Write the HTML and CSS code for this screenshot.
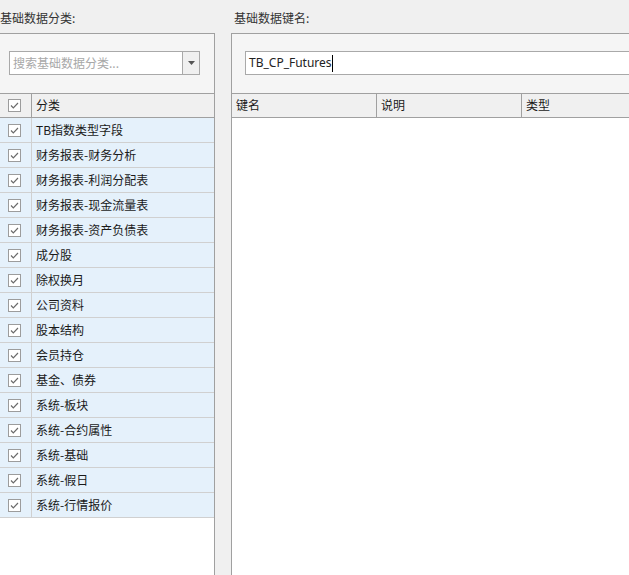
FILE: index.html
```html
<!DOCTYPE html>
<html lang="zh-CN">
<head>
<meta charset="utf-8">
<title>基础数据</title>
<link rel="stylesheet" href="styles.css">
</head>
<body>
<div class="page">
  <div class="col col-left">
    <div class="label">基础数据分类:</div>
    <div class="panel">
      <div class="panel-top">
        <div class="combo">
          <span class="combo-text">搜索基础数据分类...</span>
          <span class="combo-btn"><svg width="7" height="4" viewBox="0 0 7 4"><path d="M0 0H7L3.5 4Z" fill="#555"/></svg></span>
        </div>
      </div>
      <div class="grid">
        <div class="row head">
          <div class="cell chk"><svg class="cb" width="13" height="13" viewBox="0 0 13 13"><rect x="0.5" y="0.5" width="12" height="12" fill="#fff" stroke="#9c9c9c"/><path d="M3 6.5L5.3 8.8L10 4" fill="none" stroke="#6a6a6a" stroke-width="1.2"/></svg></div>
          <div class="cell name">分类</div>
        </div>
        <div class="row item"><div class="cell chk"><svg class="cb" width="13" height="13" viewBox="0 0 13 13"><rect x="0.5" y="0.5" width="12" height="12" fill="#fff" stroke="#9c9c9c"/><path d="M3 6.5L5.3 8.8L10 4" fill="none" stroke="#6a6a6a" stroke-width="1.2"/></svg></div><div class="cell name">TB指数类型字段</div></div>
        <div class="row item"><div class="cell chk"><svg class="cb" width="13" height="13" viewBox="0 0 13 13"><rect x="0.5" y="0.5" width="12" height="12" fill="#fff" stroke="#9c9c9c"/><path d="M3 6.5L5.3 8.8L10 4" fill="none" stroke="#6a6a6a" stroke-width="1.2"/></svg></div><div class="cell name">财务报表-财务分析</div></div>
        <div class="row item"><div class="cell chk"><svg class="cb" width="13" height="13" viewBox="0 0 13 13"><rect x="0.5" y="0.5" width="12" height="12" fill="#fff" stroke="#9c9c9c"/><path d="M3 6.5L5.3 8.8L10 4" fill="none" stroke="#6a6a6a" stroke-width="1.2"/></svg></div><div class="cell name">财务报表-利润分配表</div></div>
        <div class="row item"><div class="cell chk"><svg class="cb" width="13" height="13" viewBox="0 0 13 13"><rect x="0.5" y="0.5" width="12" height="12" fill="#fff" stroke="#9c9c9c"/><path d="M3 6.5L5.3 8.8L10 4" fill="none" stroke="#6a6a6a" stroke-width="1.2"/></svg></div><div class="cell name">财务报表-现金流量表</div></div>
        <div class="row item"><div class="cell chk"><svg class="cb" width="13" height="13" viewBox="0 0 13 13"><rect x="0.5" y="0.5" width="12" height="12" fill="#fff" stroke="#9c9c9c"/><path d="M3 6.5L5.3 8.8L10 4" fill="none" stroke="#6a6a6a" stroke-width="1.2"/></svg></div><div class="cell name">财务报表-资产负债表</div></div>
        <div class="row item"><div class="cell chk"><svg class="cb" width="13" height="13" viewBox="0 0 13 13"><rect x="0.5" y="0.5" width="12" height="12" fill="#fff" stroke="#9c9c9c"/><path d="M3 6.5L5.3 8.8L10 4" fill="none" stroke="#6a6a6a" stroke-width="1.2"/></svg></div><div class="cell name">成分股</div></div>
        <div class="row item"><div class="cell chk"><svg class="cb" width="13" height="13" viewBox="0 0 13 13"><rect x="0.5" y="0.5" width="12" height="12" fill="#fff" stroke="#9c9c9c"/><path d="M3 6.5L5.3 8.8L10 4" fill="none" stroke="#6a6a6a" stroke-width="1.2"/></svg></div><div class="cell name">除权换月</div></div>
        <div class="row item"><div class="cell chk"><svg class="cb" width="13" height="13" viewBox="0 0 13 13"><rect x="0.5" y="0.5" width="12" height="12" fill="#fff" stroke="#9c9c9c"/><path d="M3 6.5L5.3 8.8L10 4" fill="none" stroke="#6a6a6a" stroke-width="1.2"/></svg></div><div class="cell name">公司资料</div></div>
        <div class="row item"><div class="cell chk"><svg class="cb" width="13" height="13" viewBox="0 0 13 13"><rect x="0.5" y="0.5" width="12" height="12" fill="#fff" stroke="#9c9c9c"/><path d="M3 6.5L5.3 8.8L10 4" fill="none" stroke="#6a6a6a" stroke-width="1.2"/></svg></div><div class="cell name">股本结构</div></div>
        <div class="row item"><div class="cell chk"><svg class="cb" width="13" height="13" viewBox="0 0 13 13"><rect x="0.5" y="0.5" width="12" height="12" fill="#fff" stroke="#9c9c9c"/><path d="M3 6.5L5.3 8.8L10 4" fill="none" stroke="#6a6a6a" stroke-width="1.2"/></svg></div><div class="cell name">会员持仓</div></div>
        <div class="row item"><div class="cell chk"><svg class="cb" width="13" height="13" viewBox="0 0 13 13"><rect x="0.5" y="0.5" width="12" height="12" fill="#fff" stroke="#9c9c9c"/><path d="M3 6.5L5.3 8.8L10 4" fill="none" stroke="#6a6a6a" stroke-width="1.2"/></svg></div><div class="cell name">基金、债券</div></div>
        <div class="row item"><div class="cell chk"><svg class="cb" width="13" height="13" viewBox="0 0 13 13"><rect x="0.5" y="0.5" width="12" height="12" fill="#fff" stroke="#9c9c9c"/><path d="M3 6.5L5.3 8.8L10 4" fill="none" stroke="#6a6a6a" stroke-width="1.2"/></svg></div><div class="cell name">系统-板块</div></div>
        <div class="row item"><div class="cell chk"><svg class="cb" width="13" height="13" viewBox="0 0 13 13"><rect x="0.5" y="0.5" width="12" height="12" fill="#fff" stroke="#9c9c9c"/><path d="M3 6.5L5.3 8.8L10 4" fill="none" stroke="#6a6a6a" stroke-width="1.2"/></svg></div><div class="cell name">系统-合约属性</div></div>
        <div class="row item"><div class="cell chk"><svg class="cb" width="13" height="13" viewBox="0 0 13 13"><rect x="0.5" y="0.5" width="12" height="12" fill="#fff" stroke="#9c9c9c"/><path d="M3 6.5L5.3 8.8L10 4" fill="none" stroke="#6a6a6a" stroke-width="1.2"/></svg></div><div class="cell name">系统-基础</div></div>
        <div class="row item"><div class="cell chk"><svg class="cb" width="13" height="13" viewBox="0 0 13 13"><rect x="0.5" y="0.5" width="12" height="12" fill="#fff" stroke="#9c9c9c"/><path d="M3 6.5L5.3 8.8L10 4" fill="none" stroke="#6a6a6a" stroke-width="1.2"/></svg></div><div class="cell name">系统-假日</div></div>
        <div class="row item"><div class="cell chk"><svg class="cb" width="13" height="13" viewBox="0 0 13 13"><rect x="0.5" y="0.5" width="12" height="12" fill="#fff" stroke="#9c9c9c"/><path d="M3 6.5L5.3 8.8L10 4" fill="none" stroke="#6a6a6a" stroke-width="1.2"/></svg></div><div class="cell name">系统-行情报价</div></div>
      </div>
    </div>
  </div>
  <div class="col col-right">
    <div class="label">基础数据键名:</div>
    <div class="panel">
      <div class="panel-top panel-top-right">
        <div class="textbox"><span class="tb-text">TB_CP_Futures</span><span class="caret"></span></div>
      </div>
      <div class="grid">
        <div class="row head">
          <div class="cell kcol">键名</div>
          <div class="cell kcol">说明</div>
          <div class="cell klast">类型</div>
        </div>
      </div>
    </div>
  </div>
</div>
</body>
</html>
```

FILE: styles.css
```css
html, body {
  margin: 0;
  padding: 0;
  background: #f0f0f0;
  overflow: hidden;
}
body {
  width: 629px;
  height: 575px;
  font-family: "Noto Sans", "Noto Sans CJK SC", sans-serif;
  font-size: 12px;
  color: #1a1a1a;
}
.page {
  display: flex;
  gap: 16px;
  margin-left: -3px;
  height: 575px;
}
.col {
  display: flex;
  flex-direction: column;
}
.col-left {
  width: 218px;
  flex: none;
}
.col-right {
  width: 420px;
  flex: none;
}
.label {
  height: 33px;
  box-sizing: border-box;
  padding: 10px 0 0 3px;
  line-height: 16px;
  color: #333;
  white-space: nowrap;
  font-family: "Noto Sans CJK SC", sans-serif;
}
.panel {
  flex: 1;
  border: 1px solid #a0a0a0;
  border-bottom: none;
  background: #fff;
  display: flex;
  flex-direction: column;
}
.panel-top {
  background: #f5f5f5;
  padding: 17px 14px 18px 11px;
}
.panel-top-right {
  padding: 17px 0 18px 13px;
}
.combo {
  height: 24px;
  box-sizing: border-box;
  border: 1px solid #a9a9a9;
  background: #fff;
  display: flex;
  align-items: stretch;
}
.combo-text {
  flex: 1;
  padding-left: 3px;
  line-height: 22px;
  color: #a8a8a8;
  font-family: "Noto Sans CJK SC", sans-serif;
  white-space: nowrap;
  overflow: hidden;
}
.combo-btn {
  width: 16px;
  border-left: 1px solid #a9a9a9;
  background: #f0f0f0;
  display: flex;
  align-items: center;
  justify-content: center;
}
.textbox {
  height: 24px;
  box-sizing: border-box;
  border: 1px solid #a9a9a9;
  border-right: none;
  background: #fff;
  display: flex;
  align-items: center;
  padding-left: 3px;
}
.tb-text {
  color: #222;
  font-family: "Noto Sans", sans-serif;
  font-size: 12px;
  line-height: 22px;
  white-space: nowrap;
}
.caret {
  width: 1px;
  height: 17px;
  background: #000;
  margin-left: 0;
}
.grid {
  display: flex;
  flex-direction: column;
}
.row {
  display: flex;
  height: 25px;
  box-sizing: border-box;
  border-bottom: 1px solid #d0d0d0;
}
.row.head {
  border-top: 1px solid #a0a0a0;
  border-bottom: 1px solid #a0a0a0;
  height: 25px;
  background: #f0f0f0;
}
.row.item {
  background: #e5f1fb;
}
.cell {
  box-sizing: border-box;
  display: flex;
  align-items: center;
  padding-left: 4px;
  padding-bottom: 2px;
  white-space: nowrap;
  font-family: "Noto Sans CJK SC", sans-serif;
}
.cell.chk {
  width: 34px;
  padding-left: 0;
  padding-bottom: 0;
  justify-content: center;
  border-right: 1px solid #d0d0d0;
}
.row.head .cell.chk {
  border-right-color: #a0a0a0;
}
.cell.name {
  flex: 1;
}
.cb {
  display: block;
}
.kcol {
  width: 145px;
  border-right: 1px solid #a0a0a0;
}
.klast {
  flex: 1;
}
```
